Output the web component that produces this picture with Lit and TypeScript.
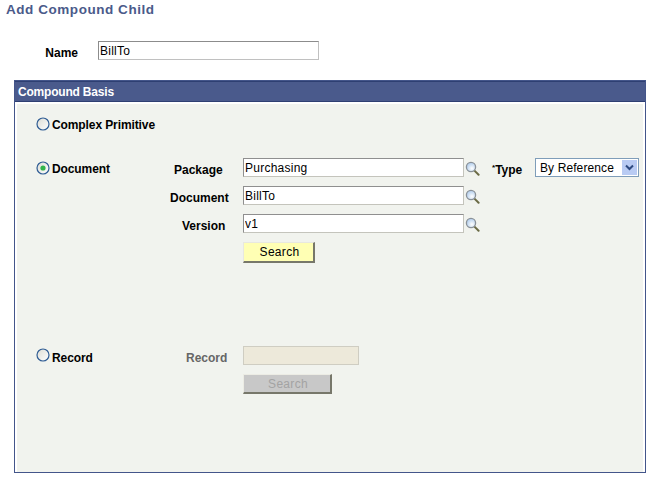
import { LitElement, html, css, svg } from "lit";
import { customElement } from "lit/decorators.js";

const lens = html`<svg class="lens" width="15" height="15" viewBox="0 0 15 15">
  <defs><radialGradient id="lg" cx="0.6" cy="0.65" r="0.7"><stop offset="0" stop-color="#ffffff"/><stop offset="1" stop-color="#a9c8ea"/></radialGradient></defs>
  <path d="M9.2 9.4 L13.6 13.8" stroke="#6b6b45" stroke-width="2" stroke-linecap="round"/>
  <circle cx="6" cy="6" r="4.6" fill="url(#lg)" stroke="#8a9198" stroke-width="1.3"/>
</svg>`;

const radio = (on: boolean) => html`<svg class="radio" width="14" height="14" viewBox="0 0 14 14">
  <defs><linearGradient id="rg" x1="0" y1="0" x2="1" y2="1"><stop offset="0" stop-color="#dcdcd4"/><stop offset="1" stop-color="#ffffff"/></linearGradient></defs>
  <circle cx="7" cy="7" r="6" fill="url(#rg)" stroke="#2f5c94" stroke-width="1.2"/>
  ${on ? svg`<circle cx="7" cy="7" r="2.6" fill="#32b44a"/>` : ""}
</svg>`;

@customElement("app-root")
export class AppRoot extends LitElement {
  static styles = css`
    :host { display: block; width: 656px; height: 483px; background: #fff; font-family: "Liberation Sans", Arial, sans-serif; font-size: 12px; color: #000; overflow: hidden; }
    .title { font-size: 13.5px; font-weight: bold; color: #4a5a8a; padding: 2px 0 0 6px; height: 20px; line-height: 16px; letter-spacing: 0.55px; }
    .name-row { display: flex; align-items: center; margin-top: 19px; height: 19px; }
    .name-label { width: 78px; text-align: right; font-weight: bold; margin-right: 20px; padding-top: 4px; }
    input { box-sizing: border-box; height: 19px; margin: 0; padding: 0 0 0 1px; font: 12px "Liberation Sans", Arial, sans-serif; letter-spacing: 0.25px; color: #000; background: #fff; border: 1px solid #c4c4bc; border-top-color: #8f8f8f; border-left-color: #8f8f8f; outline: none; border-radius: 0; }
    .name-input { width: 221px; border: 1px solid #c0c0c0; border-top-color: #8c8c8c; border-left-color: #8c8c8c; }
    .panel { box-sizing: border-box; margin: 20px 0 0 14px; width: 632px; height: 393px; border: 1px solid #43558a; display: flex; flex-direction: column; }
    .head { height: 21px; box-sizing: border-box; background: #4a5a8c; border-top: 1px solid #2e3f72; border-bottom: 1px solid #2e3f72; color: #fff; font-weight: bold; line-height: 20px; padding-left: 3px; letter-spacing: -0.2px; }
    .body { flex: 1; margin: 2px 2px 0 2px; background: #f1f3ee; padding: 10px 0 0 19px; display: flex; flex-direction: column; }
    .opt { display: flex; align-items: center; font-weight: bold; height: 19px; letter-spacing: -0.1px; }
    .opt span { position: relative; top: 1px; }
    .radio { flex: none; margin-right: 2px; }
    .doc { display: grid; grid-template-columns: 138px 69px 221px 22px 50px auto; margin-top: 25px; grid-auto-rows: 19px; row-gap: 9px; align-items: center; }
    .lab { font-weight: bold; white-space: nowrap; position: relative; top: 2px; }
    .l-document { margin-left: -4px; }
    .l-version { padding-left: 8px; }
    .doc input { width: 221px; }
    .lens { display: block; margin: 2px 0 0 1px; }
    .type { padding-left: 6px; }
    .type sup { font-size: 8px; font-weight: bold; line-height: 0; vertical-align: 4px; }
    .select { box-sizing: border-box; width: 104px; height: 19px; border: 1px solid #7f9db9; background: #fff; display: flex; align-items: center; justify-content: space-between; padding: 0 1px 0 4px; letter-spacing: 0.1px; margin-left: -1px; }
    .arrow { width: 15px; height: 15px; background: #b9cbf3; display: flex; align-items: center; justify-content: center; }
    .btn { box-sizing: border-box; text-align: center; border: 0; border-top: 1px solid #e8e8e0; border-left: 1px solid #e8e8e0; border-right: 2px solid #77776a; border-bottom: 2px solid #77776a; letter-spacing: 0.3px; padding-left: 2px; }
    .btn-search { grid-column: 3; width: 72px; height: 21px; background: #ffffb4; line-height: 19px; align-self: start; }
    .record { display: grid; grid-template-columns: 138px 69px 116px; margin-top: 85px; grid-auto-rows: 19px; row-gap: 9px; align-items: center; }
    .record .opt span { top: 2px; }
    .record .radio { position: relative; top: -1px; }
    .record .lab { color: #666; padding-left: 12px; }
    .record input { width: 116px; background: #ede9da; border: 1px solid #cfcdc2; }
    .btn-off { grid-column: 3; width: 89px; height: 20px; background: #c8c8c8; color: #a3a3a3; line-height: 18px; align-self: start; border-top-color: #ecece4; border-left-color: #ecece4; }
  `;

  render() {
    return html`
      <div class="title">Add Compound Child</div>
      <div class="name-row"><div class="name-label">Name</div><input class="name-input" value="BillTo" /></div>
      <section class="panel">
        <div class="head">Compound Basis</div>
        <div class="body">
          <div class="opt">${radio(false)}<span>Complex Primitive</span></div>
          <div class="doc">
            <div class="opt">${radio(true)}<span>Document</span></div>
            <div class="lab">Package</div>
            <input value="Purchasing" />
            <div>${lens}</div>
            <div class="lab type"><sup>*</sup>Type</div>
            <div class="select"><span>By Reference</span><span class="arrow"><svg width="9" height="7" viewBox="0 0 9 7"><path d="M1 1.5 L4.5 5 L8 1.5" fill="none" stroke="#2e4a80" stroke-width="2"/></svg></span></div>
            <div></div>
            <div class="lab l-document">Document</div>
            <input value="BillTo" />
            <div>${lens}</div>
            <div></div><div></div>
            <div></div>
            <div class="lab l-version">Version</div>
            <input value="v1" />
            <div>${lens}</div>
            <div></div><div></div>
            <div class="btn btn-search">Search</div>
          </div>
          <div class="record">
            <div class="opt">${radio(false)}<span>Record</span></div>
            <div class="lab">Record</div>
            <input disabled />
            <div class="btn btn-off">Search</div>
          </div>
        </div>
      </section>
    `;
  }
}
